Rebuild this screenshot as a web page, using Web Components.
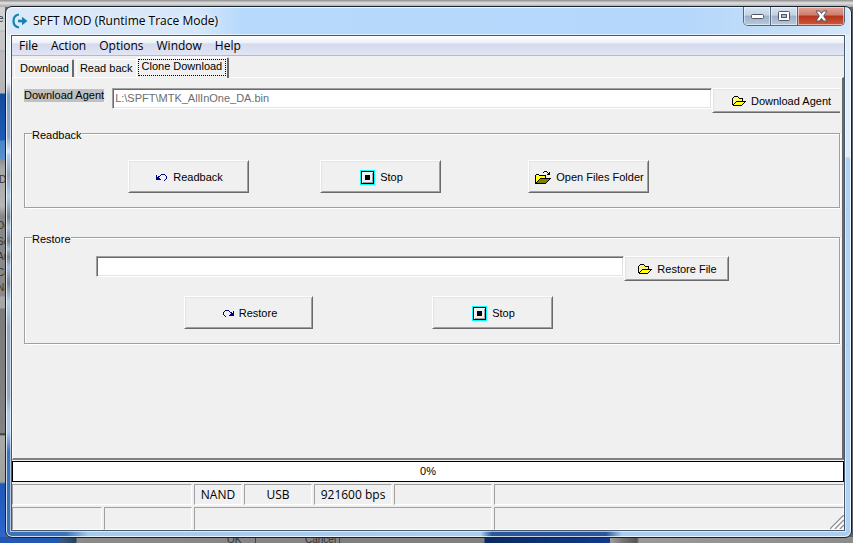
<!DOCTYPE html>
<html lang="en">
<head>
<meta charset="utf-8">
<title>SPFT MOD (Runtime Trace Mode)</title>
<style>
    * { box-sizing: border-box; }

    body {
        margin: 0;
        font-family: "Liberation Sans", Arial, sans-serif;
        font-size: 11px;
        line-height: 13px;
        color: #000;
        --face: #f0f0f0;
        --ui: "Open Sans", "Segoe UI", sans-serif;
    }

    bevel-button { width: 121px; height: 33px; }
    bevel-button.agent { width: 128px; height: 25px; }
    bevel-button.file { width: 105px; height: 25px; }
    bevel-button.wide { width: 129px; }

    group-box.readback { margin-top: 12px; --pad: 18px; }
    group-box.restore { margin-top: 21px; --pad: 10px; }

    .three {
        display: grid;
        grid-template-columns: 192px 208px auto;
        padding-left: 103px;
    }

    .inset { padding: 0 110px 0 71px; }

    .two {
        display: flex;
        gap: 119px;
        margin-top: 15px;
        padding-left: 159px;
    }
</style>
</head>
<body>

<desk-top>
    <app-window caption="SPFT MOD (Runtime Trace Mode)">
        <menu-bar></menu-bar>
        <tab-strip></tab-strip>
        <tab-page>
            <file-row label="Download Agent" value="L:\SPFT\MTK_AllInOne_DA.bin" readonly>
                <bevel-button class="agent" icon="folder" cut>Download Agent</bevel-button>
            </file-row>
            <group-box caption="Readback" class="readback">
                <div class="three">
                    <bevel-button icon="undo">Readback</bevel-button>
                    <bevel-button icon="stop">Stop</bevel-button>
                    <bevel-button icon="open">Open Files Folder</bevel-button>
                </div>
            </group-box>
            <group-box caption="Restore" class="restore">
                <file-row name="Restore file path" class="inset">
                    <bevel-button class="file" icon="folder">Restore File</bevel-button>
                </file-row>
                <div class="two">
                    <bevel-button class="wide" icon="redo">Restore</bevel-button>
                    <bevel-button icon="stop">Stop</bevel-button>
                </div>
            </group-box>
        </tab-page>
        <progress-line value="0"></progress-line>
        <status-bar></status-bar>
    </app-window>
</desk-top>

<script>
// one letter for each pixel colour, dot is empty
const COLORS = { k: '#000', n: '#000080', y: '#ffff00', w: '#fff', c: '#00ffff', o: '#808000', g: '#a0a0a0', l: '#f0f0f0', p: '#ffff99' };

const ICONS = {
    undo: [
        '.....nnnn...',
        'n...n....n..',
        'n.nn......n.',
        'nnn.......n.',
        'nnnn......n.',
        'nnnnn....n..',
        '........n...'
    ],
    folder: [
        '..kkkk........',
        '.kypypk.......',
        'kypypyykkkk...',
        'kpypypypypk...',
        'kypypypypyk...',
        'kpypkkkkkkkkkk',
        'kypkypypypypk.',
        'kpkypypypypk..',
        'kkypypypypk...',
        '.kkkkkkkkk....'
    ],
    open: [
        '.........kkk....',
        '........k...k.k.',
        '.............kk.',
        '.kkk........kkk.',
        'kpypkkkkkkk.....',
        'kypypypypyk.....',
        'kpypypypypk.....',
        'kypypkkkkkkkkkkk',
        'kpypkoooooooook.',
        'kypkoooooooook..',
        'kpkoooooooook...',
        'kkoooooooook....',
        'kkkkkkkkkkk.....'
    ],
    stop: [
        'ccccccccccccccc',
        'ckkkkkkkkkkkkkc',
        'ckwwwwwwwwwwwkc',
        'ckwwllllllllgkc',
        'ckwlllllllllgkc',
        'ckwllkkkkkllgkc',
        'ckwllkkkkkllgkc',
        'ckwllkkkkkllgkc',
        'ckwllkkkkkllgkc',
        'ckwllkkkkkllgkc',
        'ckwlllllllllgkc',
        'ckwlllllllllgkc',
        'ckwggggggggggkc',
        'ckkkkkkkkkkkkkc',
        'ccccccccccccccc'
    ]
};
ICONS.redo = ICONS.undo.map(r => [...r].reverse().join(''));

function pixelIcon(name) {
    const rows = ICONS[name];
    const w = rows[0].length;
    const h = rows.length;
    let rects = '';
    rows.forEach((row, y) => [...row].forEach((c, x) => {
        if (c !== '.') rects += `<rect x="${x}" y="${y}" width="1" height="1" fill="${COLORS[c]}"/>`;
    }));
    return `<svg width="${w}" height="${h}" viewBox="0 0 ${w} ${h}" shape-rendering="crispEdges" aria-hidden="true">${rects}</svg>`;
}


class DeskTop extends HTMLElement {
    constructor() {
        super();
        // bits of the windows behind that stick out at the edges
        this.behind = [
            { text: 'e', x: -2, y: 12 },
            { text: 'D', x: -1, y: 173 },
            { text: 'De', x: -3, y: 219 },
            { text: 'So', x: -3, y: 235 },
            { text: 'Au', x: -3, y: 250 },
            { text: 'Ce', x: -3, y: 266 },
            { text: 'Na', x: -3, y: 281 },
            { text: 'OK', x: 227, y: 533 },
            { text: 'Cancel', x: 305, y: 533 }
        ];
        this.attachShadow({ mode: 'open' }).innerHTML = `
        <style>
            :host {
                display: flex;
                position: relative;
                box-sizing: border-box;
                min-height: 100vh;
                padding: 6px 1px 5px 5px;
                overflow: hidden;
                background:
                    linear-gradient(#8c8c8c, #e2e2e2 3px, #b0b0b0 6px) top / 100% 7px no-repeat,
                    linear-gradient(90deg, #2457b4 60px, #3c5a80 60px, #26415f 76px, #8b8b8b 77px, #858585 255px, #444 255px, #444 256px, #858585 256px, #858585 339px, #444 339px, #444 340px, #808080 340px, #808080 484px, #0a2a5c 485px, #14388c 610px, #a0a0a0 610px, #777 622px, #555 637px, #999 639px, #8c8c8c) bottom / 100% 6px no-repeat,
                    linear-gradient(#d2d2d2 30px, #a9b3c6 31px, #c9c9c9 32px, #c4c4c4 50px, #9ba7bf 51px, #bcbcbc 52px, #b5b5b5 93px, #124b9c 94px, #1c5cb6 140px, #4a87c8 141px, #5890cc 159px, #8b8f94 160px, #a6a6a6 168px, #b6b6b6 206px, #878787 216px, #8a8a8a 296px, #a8a8a8 297px, #a5a5a5 308px, #7b7b7b 309px, #828282 433px, #222 434px, #aaa 436px, #a0a0a0 482px, #2058b8 484px, #2e68cf) left / 5px 100% no-repeat,
                    #5d6468;
            }
            .behind span {
                position: absolute;
                font-size: 10px;
                color: #333;
            }
            ::slotted(*) { flex: 1; position: relative; }
        </style>
        <div class="behind" aria-hidden="true">
            ${this.behind.map(({ text, x, y }) => `<span style="left:${x}px;top:${y}px">${text}</span>`).join('')}
        </div>
        <slot></slot>`;
    }
}
customElements.define('desk-top', DeskTop);


class AppWindow extends HTMLElement {
    constructor() {
        super();
        this.attachShadow({ mode: 'open' });
    }

    connectedCallback() {
        this.shadowRoot.innerHTML = `
        <style>
            :host {
                display: flex;
                flex-direction: column;
                box-sizing: border-box;
                min-width: 0;
                padding: 0 6px 6px 5px;
                border: 1px solid #17222e;
                border-radius: 7px;
                box-shadow: inset 0 0 0 1px rgba(255, 255, 255, .75);
                background:
                    linear-gradient(90deg, #dce9f8, #d6e7fa 190px, #b7d9fc 235px, #b5d7fb 680px, #c4def8 780px, #d5e7fa) top / 100% 28px no-repeat,
                    linear-gradient(90deg, #3a72bb 60px, #a5caed 82px, #a9cef0 475px, #2a569b 486px, #2a569b 600px, #a9cef0 616px) bottom / 100% 7px no-repeat,
                    linear-gradient(#e4effa 75px, #88a2c6 88px, #90aacb 130px, #dce7f3 145px, #aecdf0 148px, #8ba4bf 168px, #aacdee 190px, #71859a 210px, #9fbddd 220px, #71859a 234px, #9fbddd 242px, #71859a 250px, #9fbddd 260px, #71859a 276px, #add0f2 295px, #91a9c7 320px, #91a9c7 390px, #a8cbee 405px, #a8cbee 425px, #3d71b8 445px) left / 7px 100% no-repeat,
                    linear-gradient(#e0edfb 150px, #b0d2f4 151px) right / 8px 100% no-repeat,
                    #b5d6f7;
            }
            header {
                display: flex;
                align-items: flex-start;
                height: 28px;
                flex: none;
            }
            .logo { margin: 6px 4px 0 1px; flex: none; }
            h1 {
                flex: 1;
                margin: 6px 0 0;
                font: 400 12px/16px var(--ui);
                text-shadow: 0 0 6px #fff;
                white-space: nowrap;
            }
            .controls {
                display: flex;
                border: 1px solid #596675;
                border-top: 0;
                border-radius: 0 0 5px 5px;
                overflow: hidden;
            }
            .controls button {
                display: flex;
                justify-content: center;
                align-items: center;
                width: 27px;
                height: 18px;
                padding: 0;
                border: 0;
                border-right: 1px solid #596675;
                background: linear-gradient(#d6e4f2, #c3d3e4 45%, #9cb1c8 50%, #b5cadf);
                box-shadow: inset 0 0 0 1px rgba(255, 255, 255, .5);
            }
            .controls .close {
                width: 46px;
                border-right: 0;
                background: linear-gradient(#e3a597, #d07c6c 45%, #b6321c 50%, #cf5a3a);
            }
            main {
                display: flex;
                flex-direction: column;
                flex: 1;
                border: 1px solid #47586c;
                background: var(--face);
                box-shadow: 0 0 0 1px rgba(255, 255, 255, .6);
            }
        </style>
        <header>
            <svg class="logo" width="17" height="16" viewBox="0 0 17 16" fill="none" stroke="#1583b0" aria-hidden="true">
                <path d="M7 1.500C3.500 2 1.500 4.500 1.500 8S3.500 14 7 14.500" stroke-width="2.200"/>
                <path d="M6 8h6" stroke-width="2.600"/>
                <path d="M10 3.800L15.500 8 10 12.200z" fill="#1583b0" stroke="none"/>
            </svg>
            <h1>${this.getAttribute('caption')}</h1>
            <div class="controls">
                <button aria-label="Minimize"><svg width="13" height="5"><rect x=".5" y=".5" width="12" height="4" rx="1" fill="#fff" stroke="#535666"/></svg></button>
                <button aria-label="Maximize"><svg width="12" height="10"><rect x=".5" y=".5" width="11" height="9" rx="1" fill="#fff" stroke="#535666"/><rect x="3.500" y="3.500" width="5" height="3" fill="#a9bdd2" stroke="#535666"/></svg></button>
                <button class="close" aria-label="Close"><svg width="13" height="12" viewBox="0 0 13 12"><path d="M1 1h3.500l2 2.500 2-2.500H12L8.700 6l3.300 5H8.500l-2-2.500-2 2.500H1l3.300-5z" fill="#fff" stroke="#535666"/></svg></button>
            </div>
        </header>
        <main><slot></slot></main>
        `;
    }
}
customElements.define('app-window', AppWindow);


class MenuBar extends HTMLElement {
    constructor() {
        super();
        this.items = ['File', 'Action', 'Options', 'Window', 'Help'];
        this.attachShadow({ mode: 'open' }).innerHTML = `
        <style>
            :host { display: block; }
            nav {
                display: flex;
                gap: 13px;
                padding: 1px 0 0 7px;
                border-bottom: 1px solid #b4b9d0;
                background: linear-gradient(#fff, #eef1f8 35%, #d5dbee 42%, #e1e5f4);
            }
            button {
                padding: 0;
                border: 0;
                background: none;
                font: 12px/18px var(--ui);
                color: #000;
            }
        </style>
        <nav>${this.items.map(item => `<button>${item}</button>`).join('')}</nav>
        `;
    }
}
customElements.define('menu-bar', MenuBar);


class TabStrip extends HTMLElement {
    constructor() {
        super();
        this.attachShadow({ mode: 'open' }).innerHTML = `
        <style>
            :host { display: block; }
            div {
                display: flex;
                align-items: flex-end;
                height: 21px;
                padding-left: 2px;
            }
            button {
                height: 18px;
                padding: 0 3px;
                border: 1px solid #fff;
                border-width: 1px 0 0 1px;
                border-radius: 2px 2px 0 0;
                background: var(--face);
                font: inherit;
                color: #000;
                white-space: nowrap;
            }
            .first { padding-left: 5px; border-right: 2px solid #696969; margin-right: 2px; }
            .active {
                height: 21px;
                margin-bottom: -1px;
                padding: 0 1px 2px;
                border-right: 2px solid #696969;
                z-index: 1;
            }
            .active span { display: block; padding: 0 3px 2px; border: 1px dotted #000; }
        </style>
        <div role="tablist">
            <button class="first" role="tab">Download</button>
            <button role="tab">Read back</button>
            <button class="active" role="tab" aria-selected="true"><span>Clone Download</span></button>
        </div>
        `;
    }
}
customElements.define('tab-strip', TabStrip);


class TabPage extends HTMLElement {
    constructor() {
        super();
        this.attachShadow({ mode: 'open' }).innerHTML = `
        <style>
            :host {
                display: block;
                flex: 1;
                padding: 10px 2px 12px 11px;
                border: 1px solid #fff;
                border-right: 2px solid #696969;
                border-bottom: 2px solid #808080;
            }
        </style>
        <slot></slot>
        `;
    }
}
customElements.define('tab-page', TabPage);


class BevelButton extends HTMLElement {
    constructor() {
        super();
        this.attachShadow({ mode: 'open' });
    }

    connectedCallback() {
        this.shadowRoot.innerHTML = `
        <style>
            :host { display: block; flex: none; }
            button {
                display: flex;
                align-items: center;
                justify-content: center;
                gap: 5px;
                width: 100%;
                height: 100%;
                padding: 1px 0 0 2px;
                border: 1px solid;
                border-color: #fff #696969 #696969 #fff;
                background: var(--face);
                box-shadow: inset 1px 1px #e3e3e3, inset -1px -1px #a0a0a0;
                font: inherit;
                color: #000;
                white-space: nowrap;
            }
            :host([cut]) button {
                padding-left: 10px;
                border-right: 0;
                box-shadow: inset 1px 1px #e3e3e3, inset 0 -1px #a0a0a0;
            }
        </style>
        <button>${pixelIcon(this.getAttribute('icon'))}<span><slot></slot></span></button>
        `;
    }
}
customElements.define('bevel-button', BevelButton);


class FileRow extends HTMLElement {
    constructor() {
        super();
        this.attachShadow({ mode: 'open' });
    }

    connectedCallback() {
        const label = this.getAttribute('label');
        const name = this.getAttribute('name');
        this.shadowRoot.innerHTML = `
        <style>
            :host { display: flex; align-items: flex-start; }
            label {
                margin: 1px 8px 0 0;
                background: #c0c0c0;
                white-space: nowrap;
            }
            input {
                box-sizing: border-box;
                flex: 1;
                min-width: 0;
                height: 21px;
                margin: 0;
                padding: 0 2px 1px;
                border: 1px solid;
                border-color: #a0a0a0 #fff #fff #a0a0a0;
                box-shadow: inset 1px 1px #696969, inset -1px -1px #e3e3e3;
                background: #fff;
                font: inherit;
                color: #000;
                outline: 0;
            }
            input[readonly] { color: #6d6d6d; }
        </style>
        ${label ? `<label for="path">${label}</label>` : ''}
        <input id="path" type="text" ${name ? `aria-label="${name}"` : ''} value="${this.getAttribute('value') || ''}" ${this.hasAttribute('readonly') ? 'readonly' : ''}>
        <slot></slot>
        `;
    }
}
customElements.define('file-row', FileRow);


class GroupBox extends HTMLElement {
    constructor() {
        super();
        this.attachShadow({ mode: 'open' });
    }

    connectedCallback() {
        this.shadowRoot.innerHTML = `
        <style>
            :host { display: block; }
            fieldset {
                min-width: 0;
                margin: 0;
                padding: var(--pad) 0 14px;
                border: 1px solid #a0a0a0;
                box-shadow: 1px 1px #fff, inset 1px 1px #fff;
            }
            legend {
                margin-left: 7px;
                padding: 4px 0 0;
                background: var(--face);
            }
        </style>
        <fieldset>
            <legend>${this.getAttribute('caption')}</legend>
            <slot></slot>
        </fieldset>
        `;
    }
}
customElements.define('group-box', GroupBox);


class ProgressLine extends HTMLElement {
    constructor() {
        super();
        this.attachShadow({ mode: 'open' });
    }

    connectedCallback() {
        const value = this.getAttribute('value');
        this.shadowRoot.innerHTML = `
        <style>
            :host { display: block; margin-top: 1px; }
            div {
                border: 1px solid #000;
                background: #fff;
                line-height: 19px;
                text-align: center;
            }
        </style>
        <div role="progressbar" aria-valuenow="${value}">${value}%</div>
        `;
    }
}
customElements.define('progress-line', ProgressLine);


class StatusBar extends HTMLElement {
    constructor() {
        super();
        this.rows = [
            ['', 'NAND', 'USB', '921600 bps', '', ''],
            ['', '', '', '']
        ];
        this.attachShadow({ mode: 'open' }).innerHTML = `
        <style>
            :host { display: block; position: relative; padding: 2px 0 0; font: 12px/19px var(--ui); }
            .row { display: grid; gap: 2px; }
            .row + .row { margin-top: 2px; }
            .row:nth-of-type(1) { grid-template-columns: 180px 48px 68px 78px 98px 1fr; }
            .row:nth-of-type(2) { grid-template-columns: 90px 88px 298px 1fr; }
            .row span {
                height: 21px;
                box-sizing: border-box;
                border: 1px solid;
                border-color: #a0a0a0 #fff #fff #a0a0a0;
                text-align: center;
                white-space: nowrap;
            }
            .row + .row span { height: 23px; }
            svg { position: absolute; right: 0; bottom: 1px; }
        </style>
        ${this.rows.map(row => `<div class="row">${row.map(text => `<span>${text}</span>`).join('')}</div>`).join('')}
        <svg width="14" height="14" stroke-width="1.500" aria-hidden="true">
            <path d="M0 14L14 0M5 14l9-9M10 14l4-4" stroke="#909090"/>
            <path d="M2 14L14 2M7 14l7-7M12 14l2-2" stroke="#fff"/>
        </svg>
        `;
    }
}
customElements.define('status-bar', StatusBar);
</script>
</body>
</html>
